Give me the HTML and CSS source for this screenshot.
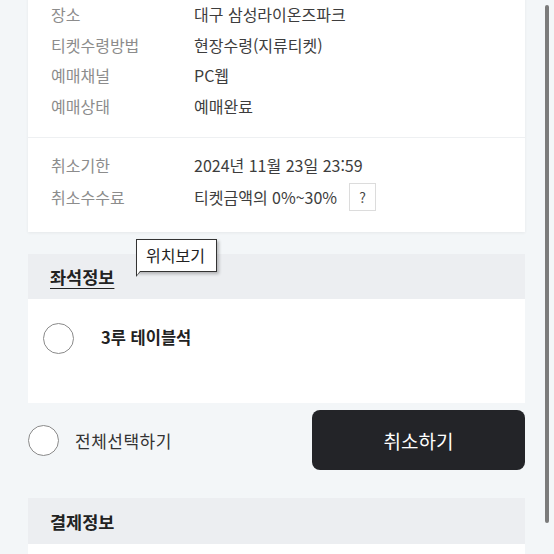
FILE: index.html
```html
<!DOCTYPE html>
<html lang="ko">
<head>
<meta charset="utf-8">
<meta content="width=device-width, initial-scale=1.0" name="viewport">
<title>예매내역</title>
<link rel="stylesheet" href="styles.css">
</head>
<body>
<div class="wrap">
  <div class="card info">
    <dl class="grp">
      <div class="row"><dt>장소</dt><dd>대구 삼성라이온즈파크</dd></div>
      <div class="row"><dt>티켓수령방법</dt><dd>현장수령(지류티켓)</dd></div>
      <div class="row"><dt>예매채널</dt><dd>PC웹</dd></div>
      <div class="row"><dt>예매상태</dt><dd>예매완료</dd></div>
    </dl>
    <dl class="grp grp2">
      <div class="row"><dt>취소기한</dt><dd>2024년 11월 23일 23:59</dd></div>
      <div class="row"><dt>취소수수료</dt><dd>티켓금액의 0%~30% <a class="q">?</a></dd></div>
    </dl>
  </div>

  <section class="sec seat">
    <h2 class="sec-hd"><u>좌석정보</u></h2>
    <span class="tip">위치보기</span>
    <div class="sec-bd">
      <label class="chk"><i class="circ"></i><b>3루 테이블석</b></label>
    </div>
  </section>

  <div class="act">
    <label class="all"><i class="circ"></i>전체선택하기</label>
    <button class="btn">취소하기</button>
  </div>

  <section class="sec pay">
    <h2 class="sec-hd">결제정보</h2>
    <div class="sec-bd"></div>
  </section>
</div>
<i class="sbar"></i>
</body>
</html>
```

FILE: styles.css
```css
*{box-sizing:border-box}
html,body{height:100%;overflow:hidden}
body{margin:0;background:#f3f6f8;font-family:"Noto Sans CJK KR","Noto Sans",sans-serif;color:#333;position:relative}
.wrap{padding:0 29px 0 28px}
.card{background:#fff;box-shadow:0 1px 3px rgba(0,0,0,.06)}
.info{margin-top:-20px;padding:19px 0 18px}
.grp{margin:0;padding:0 0 16px}
.grp2{border-top:1px solid #eef0f2;padding:12px 0 0}
.row{display:flex;align-items:center;height:30.6px;padding-left:23px;font-size:16px}
.grp2 .row{height:30px;margin-bottom:2px}
dt{width:143px;color:#8c8c8c}
dd{margin:0;color:#3d3d3d;display:flex;align-items:center}
.q{display:inline-flex;align-items:center;justify-content:center;width:27px;height:28px;margin-left:12px;border:1px solid #dcdcdc;background:#fff;font-size:14px;color:#444}
.sec{position:relative;margin-top:22px}
.sec-hd{margin:0;height:45px;display:flex;align-items:center;padding:0 22px;background:#eceef1;font-size:17.5px;font-weight:700;color:#222}
.sec-hd u{text-underline-offset:4px;text-decoration-thickness:1px}
.sec-bd{background:#fff;height:104px;padding:24px 15px 0}
.chk{display:flex;align-items:center;gap:27px}
.chk b{font-size:16.5px;color:#222;margin-top:-4px}
.circ{display:block;width:31px;height:31px;border:1.5px solid #8a8a8a;border-radius:50%;background:#fff}
.tip{position:absolute;left:108px;top:-15px;padding:3px 11px 4px 9px;background:#fff;border:1px solid #333;font-size:16px;color:#222;box-shadow:2px 2px 3px rgba(0,0,0,.25)}
.tip:before{content:'';position:absolute;left:-1px;bottom:-6px;border-top:6px solid #333;border-right:5px solid transparent}
.tip:after{content:'';position:absolute;left:0;bottom:-4px;border-top:4px solid #fff;border-right:3px solid transparent}
.act{display:flex;align-items:center;justify-content:space-between;margin-top:7px;height:60px}
.all{display:flex;align-items:center;gap:16px;font-size:17px;letter-spacing:.5px;color:#333}
.btn{width:213px;height:60px;border:0;border-radius:8px;background:#232428;color:#fff;font:19px "Noto Sans CJK KR",sans-serif}
.pay{margin-top:28px}
.pay .sec-hd{height:46px}
.pay .sec-bd{height:60px}
.sbar{position:absolute;left:545px;top:5px;width:4px;height:518px;border-radius:2px;background:#7b7b7b}
```
